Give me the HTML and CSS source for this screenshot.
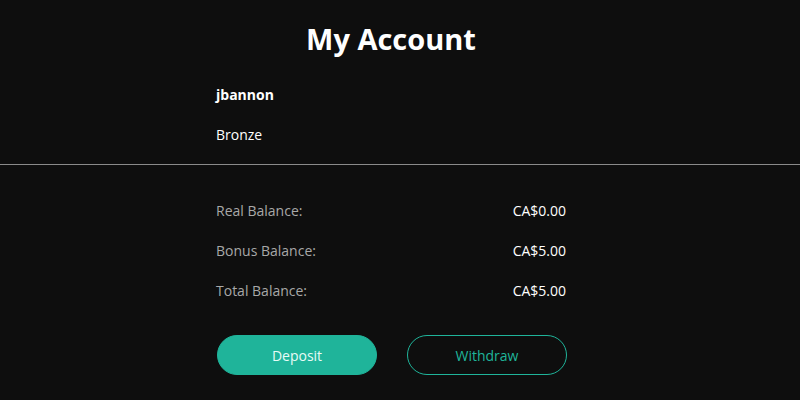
FILE: index.html
```html
<!DOCTYPE html>
<html>
<head>
<meta charset="utf-8">
<link rel="stylesheet" href="styles.css">
</head>
<body>
<div class="page">
  <h1 class="title">My Account</h1>
  <div class="col user">
    <div class="username">jbannon</div>
    <div class="tier">Bronze</div>
  </div>
</div>
<hr class="divider">
<div class="page">
  <div class="col balances">
    <div class="row"><span class="label">Real Balance:</span><span class="value">CA$0.00</span></div>
    <div class="row"><span class="label">Bonus Balance:</span><span class="value">CA$5.00</span></div>
    <div class="row"><span class="label">Total Balance:</span><span class="value">CA$5.00</span></div>
  </div>
  <div class="col actions">
    <button class="btn btn-primary">Deposit</button>
    <button class="btn btn-outline">Withdraw</button>
  </div>
</div>
</body>
</html>
```
FILE: styles.css
```css
html, body {
  margin: 0;
  padding: 0;
  background: #0e0e0e;
  font-family: "Open Sans", "Liberation Sans", sans-serif;
  color: #ffffff;
  height: 400px;
  overflow: hidden;
}
.page {
  padding-right: 18px;
}
.title {
  margin: 0;
  padding-top: 18px;
  font-size: 29px;
  font-weight: 700;
  text-align: center;
  line-height: 41px;
}
.col {
  width: 350px;
  margin: 0 auto;
}
.user {
  padding-top: 26px;
  padding-bottom: 19px;
}
.username {
  font-size: 14px;
  font-weight: 700;
  line-height: 20px;
}
.tier {
  font-size: 14px;
  line-height: 20px;
  margin-top: 20px;
}
.divider {
  margin: 0;
  border: 0;
  height: 1px;
  background: #8a8a8a;
}
.balances {
  padding-top: 36px;
  display: flex;
  flex-direction: column;
  gap: 20px;
}
.row {
  display: flex;
  justify-content: space-between;
  font-size: 14px;
  line-height: 20px;
}
.label {
  color: #a8a8a8;
}
.value {
  color: #ffffff;
}
.actions {
  display: flex;
  gap: 30px;
  margin-top: 34px;
  padding-left: 1px;
  box-sizing: border-box;
}
.btn {
  flex: 0 0 160px;
  width: 160px;
  height: 40px;
  border-radius: 20px;
  font-family: "Open Sans", "Liberation Sans", sans-serif;
  font-size: 14px;
  cursor: pointer;
}
.btn-primary {
  background: #1fb49a;
  border: 1px solid #1fb49a;
  color: #e8fbf6;
}
.btn-outline {
  background: transparent;
  border: 1px solid #1fb49a;
  color: #1fb49a;
}
```
